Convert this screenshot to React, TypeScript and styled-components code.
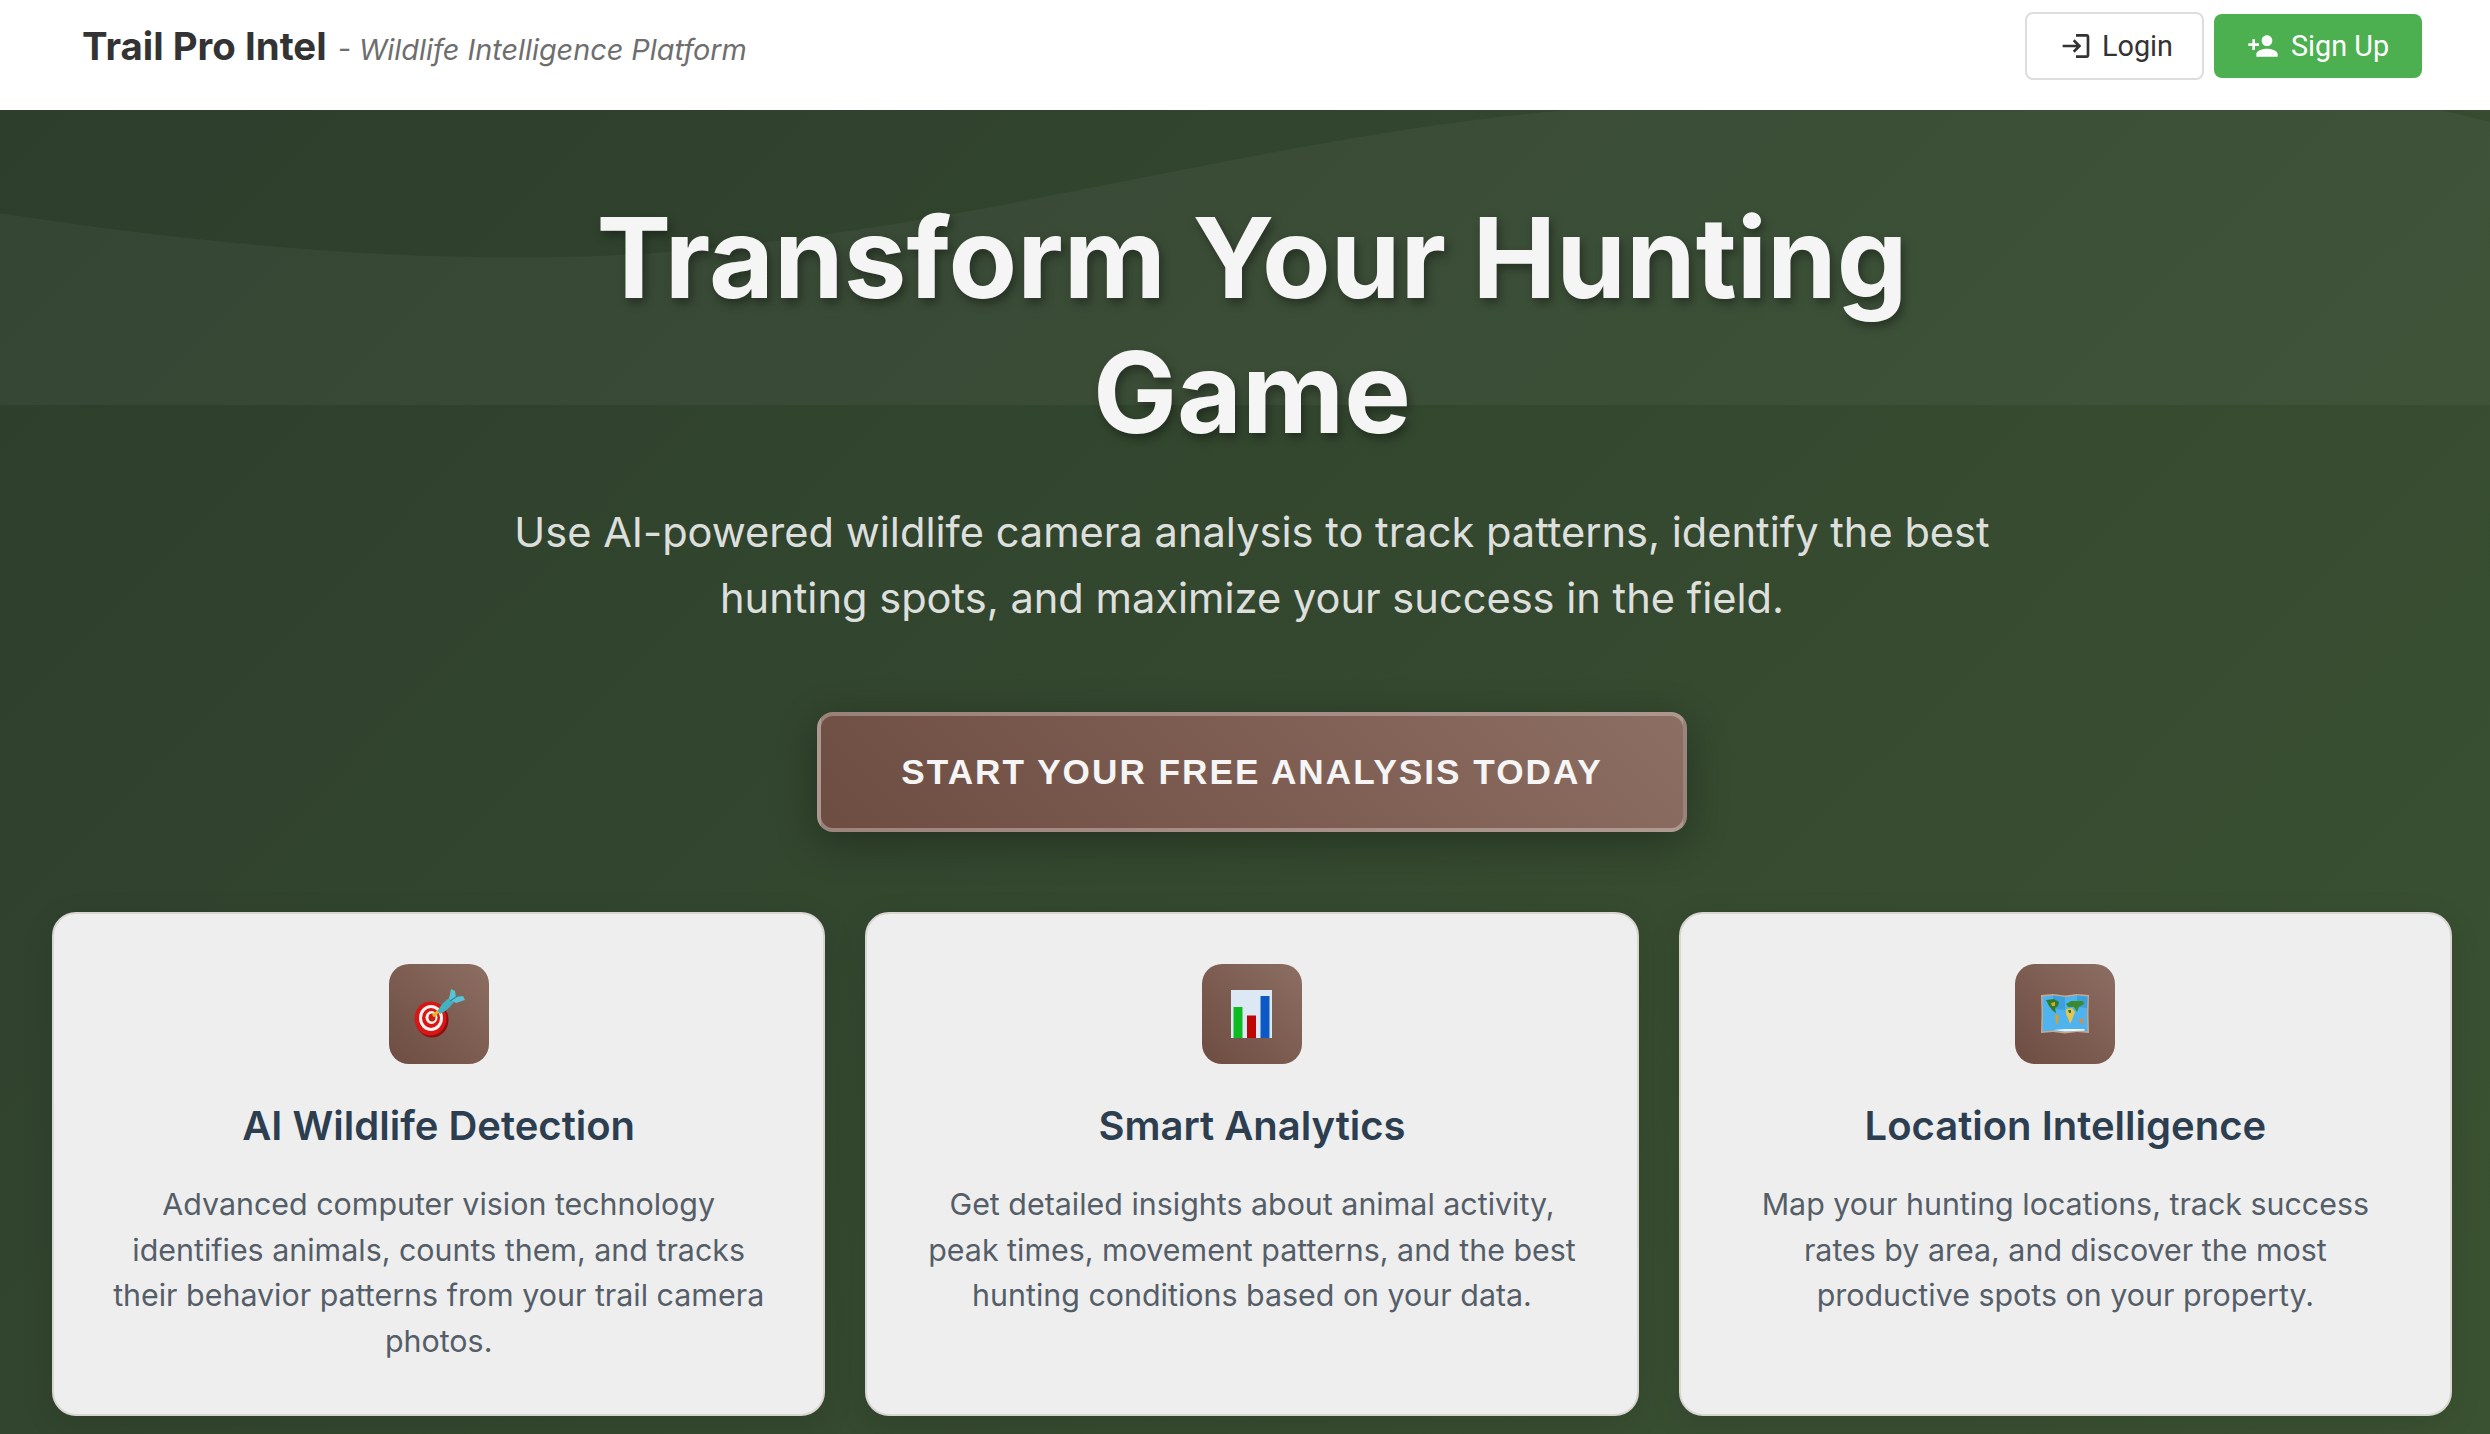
import React from 'react';
import styled, { createGlobalStyle } from 'styled-components';
import { MdLogin, MdPersonAdd } from 'react-icons/md';

const GlobalStyle = createGlobalStyle`
  html, body {
    margin: 0;
    padding: 0;
    height: 1434px;
    overflow: hidden;
    font-family: Inter, "Liberation Sans", sans-serif;
  }
`;

const Page = styled.div`
  width: 2490px;
  height: 1434px;
  display: flex;
  flex-direction: column;
  overflow: hidden;
`;

const Header = styled.header`
  height: 110px;
  flex: none;
  background: #fff;
  display: flex;
  align-items: center;
  justify-content: space-between;
  padding: 0 68px 18px 82px;
  box-sizing: border-box;
  position: relative;
  z-index: 2;
`;

const Brand = styled.div`
  display: flex;
  align-items: baseline;
  gap: 11px;
`;

const BrandName = styled.span`
  font-size: 38.4px;
  font-weight: 700;
  color: #333;
`;

const Tagline = styled.span`
  font-size: 28.8px;
  font-style: italic;
  color: #6e6e6e;
`;

const HeaderActions = styled.div`
  display: flex;
  align-items: center;
  gap: 10px;
`;

const NavButton = styled.button<{ $primary?: boolean }>`
  font-family: Roboto, sans-serif;
  font-size: 28.8px;
  font-weight: 400;
  display: flex;
  align-items: center;
  justify-content: center;
  gap: ${props => (props.$primary ? '12px' : '10px')};
  padding: ${props => (props.$primary ? '0' : '0 0 0 4px')};
  box-sizing: border-box;
  border-radius: 8px;
  cursor: pointer;
  width: ${props => (props.$primary ? '208px' : '179px')};
  height: ${props => (props.$primary ? '64px' : '68px')};
  background: ${props => (props.$primary ? '#4caf50' : '#fff')};
  color: ${props => (props.$primary ? '#fff' : '#333')};
  border: ${props => (props.$primary ? 'none' : '2px solid #ddd')};

  svg {
    width: 32px;
    height: 32px;
  }
`;

const Hero = styled.main`
  flex: 1;
  position: relative;
  display: flex;
  flex-direction: column;
  align-items: center;
  padding: 80px 38px 0 52px;
  background: linear-gradient(135deg, #2d3e2c 0%, #3b5232 100%);
`;

const HeroWave = styled.svg`
  position: absolute;
  top: 0;
  left: 0;
  width: 100%;
  height: 295px;
`;

const HeroTitle = styled.h1`
  position: relative;
  margin: 0;
  width: 1500px;
  font-size: 112px;
  line-height: 135px;
  font-weight: 700;
  text-align: center;
  color: #f5f5f5;
  text-shadow: 3px 5px 10px rgba(0, 0, 0, 0.35);
`;

const HeroSubtitle = styled.p`
  position: relative;
  margin: 39px 0 0;
  width: 1600px;
  font-size: 41.6px;
  line-height: 66px;
  text-align: center;
  color: rgba(245, 245, 245, 0.9);
`;

const CtaButton = styled.button`
  margin-top: 81px;
  width: 870px;
  height: 120px;
  flex: none;
  box-sizing: border-box;
  border: 4px solid rgba(255, 255, 255, 0.3);
  border-radius: 16px;
  background: linear-gradient(45deg, #6d4c41 0%, #8d6e63 100%);
  box-shadow: 0 10px 40px rgba(0, 0, 0, 0.3);
  color: #f5f5f5;
  font-family: "Liberation Sans", Arial, sans-serif;
  font-size: 35.2px;
  font-weight: 700;
  letter-spacing: 2px;
  text-transform: uppercase;
  cursor: pointer;
`;

const CardGrid = styled.section`
  margin-top: 80px;
  width: 100%;
  display: grid;
  grid-template-columns: repeat(3, 1fr);
  gap: 40px;
`;

const Card = styled.article`
  height: 504px;
  box-sizing: border-box;
  padding: 50px 50px 0;
  display: flex;
  flex-direction: column;
  align-items: center;
  background: #eee;
  border: 2px solid #d9d6d2;
  border-radius: 24px;
  box-shadow: 0 8px 32px rgba(0, 0, 0, 0.1);
`;

const CardIcon = styled.div`
  width: 100px;
  height: 100px;
  flex: none;
  display: flex;
  align-items: center;
  justify-content: center;
  border-radius: 20px;
  background: linear-gradient(45deg, #6d4c41 0%, #8d6e63 100%);
`;

const CardTitle = styled.h3`
  margin: 36px 0 0;
  font-size: 40px;
  line-height: 52px;
  font-weight: 600;
  color: #2c3e50;
`;

const CardText = styled.p`
  margin: 30px 0 0;
  font-size: 30.4px;
  line-height: 45.6px;
  text-align: center;
  color: #555e68;
`;

const TargetIcon = () => (
  <svg width="60" height="60" viewBox="0 0 60 60">
    <ellipse cx="23" cy="36" rx="16.500" ry="17.500" fill="#8f0d0d" />
    <ellipse cx="21.500" cy="34.500" rx="16" ry="17" fill="#d81616" />
    <ellipse cx="22" cy="34" rx="12" ry="13" fill="#f6f2f0" />
    <ellipse cx="22" cy="34" rx="9" ry="10" fill="#d81616" />
    <ellipse cx="22.500" cy="33.500" rx="6" ry="6.500" fill="#f6f2f0" />
    <ellipse cx="23" cy="33.500" rx="3.500" ry="4" fill="#c8200f" />
    <path d="M24 32 L31 26" stroke="#e8b422" strokeWidth="3" />
    <path d="M29 27 C31 21 37 16 42 13 L45 18 C41 23 36 28 31 30 Z" fill="#43b3c4" />
    <path d="M40 15 L42 5 L46 7 L47 13 L54 12 L56 16 L47 19 Z" fill="#5cc3d3" />
    <path d="M41 17 L50 11" stroke="#2f8797" strokeWidth="1.200" />
  </svg>
);

const ChartIcon = () => (
  <svg width="41" height="48" viewBox="0 0 41 48">
    <rect width="41" height="48" fill="#dce8f3" />
    <rect x="2.500" y="17" width="9" height="31" fill="#0dbb22" />
    <rect x="16" y="25.500" width="9" height="22.500" fill="#bf0606" />
    <rect x="29.500" y="6" width="9" height="42" fill="#0c58c4" />
  </svg>
);

const MapIcon = () => (
  <svg width="48" height="40" viewBox="0 0 48 40">
    <path d="M0 1 L12 0 L24 1.500 L36 0 L48 1 L47.500 20 L48 39 L36 38 L24 39.500 L12 38 L0 39 L.5 20 Z" fill="#c9a88f" />
    <path d="M1.500 2.500 L12 1.500 L24 3 L36 1.500 L46.500 2.500 L46 20 L46.500 37.500 L36 36.500 L24 38 L12 36.500 L1.500 37.500 L2 20 Z" fill="#4fb3ef" />
    <path d="M12 1.500 L24 3 L24 16 L12 15 Z" fill="#3f9fdc" />
    <path d="M36 1.500 L46.500 2.500 L46 14 L36 13 Z" fill="#3f9fdc" />
    <path d="M5 6 L13 5 L18 8 L17 12 L14 14 L15 19 L12 17 L8 12 Z" fill="#2f7d2a" />
    <path d="M10 9 L14 8 L14 12 L11 12 Z" fill="#d9a636" />
    <path d="M14 20 L18 22 L17 28 L16 32 L15 29 Z" fill="#d2a32f" />
    <path d="M25 10 L30 7 L42 7 L43 10 L38 13 L36 18 L33 13 L27 13 Z" fill="#3c8a30" />
    <path d="M25 15 L31 14 L34 18 L31 26 L29 30 L27 24 L25 20 Z" fill="#e6c64e" />
    <path d="M27 16 L30 16 L30 19 L28 19 Z" fill="#2f7d2a" />
    <path d="M38 25 L42 25 L42 29 L39 29 Z" fill="#e58a2e" />
    <path d="M12 36 L24 35 L43 35 L44 36.500 L24 37.500 Z" fill="#eef6fb" />
  </svg>
);

const features = [
  {
    icon: <TargetIcon />,
    title: 'AI Wildlife Detection',
    text: 'Advanced computer vision technology identifies animals, counts them, and tracks their behavior patterns from your trail camera photos.',
  },
  {
    icon: <ChartIcon />,
    title: 'Smart Analytics',
    text: 'Get detailed insights about animal activity, peak times, movement patterns, and the best hunting conditions based on your data.',
  },
  {
    icon: <MapIcon />,
    title: 'Location Intelligence',
    text: 'Map your hunting locations, track success rates by area, and discover the most productive spots on your property.',
  },
];

export default function App() {
  return (
    <Page>
      <GlobalStyle />
      <Header>
        <Brand>
          <BrandName>Trail Pro Intel</BrandName>
          <Tagline>- Wildlife Intelligence Platform</Tagline>
        </Brand>
        <HeaderActions>
          <NavButton>
            <MdLogin />
            Login
          </NavButton>
          <NavButton $primary>
            <MdPersonAdd />
            Sign Up
          </NavButton>
        </HeaderActions>
      </Header>
      <Hero>
        <HeroWave viewBox="0 0 100 100" preserveAspectRatio="none">
          <path
            d="M0 35 C7 44 14 50 21 50 C36 50 49 10 63 0 C72 -8 90 -8 98 0 L100 4 L100 100 L0 100 Z"
            fill="#fff"
            fillOpacity="0.04"
          />
        </HeroWave>
        <HeroTitle>Transform Your Hunting Game</HeroTitle>
        <HeroSubtitle>
          Use AI-powered wildlife camera analysis to track patterns, identify the best hunting spots, and maximize your success in the field.
        </HeroSubtitle>
        <CtaButton>Start Your Free Analysis Today</CtaButton>
        <CardGrid>
          {features.map(feature => (
            <Card key={feature.title}>
              <CardIcon>{feature.icon}</CardIcon>
              <CardTitle>{feature.title}</CardTitle>
              <CardText>{feature.text}</CardText>
            </Card>
          ))}
        </CardGrid>
      </Hero>
    </Page>
  );
}
